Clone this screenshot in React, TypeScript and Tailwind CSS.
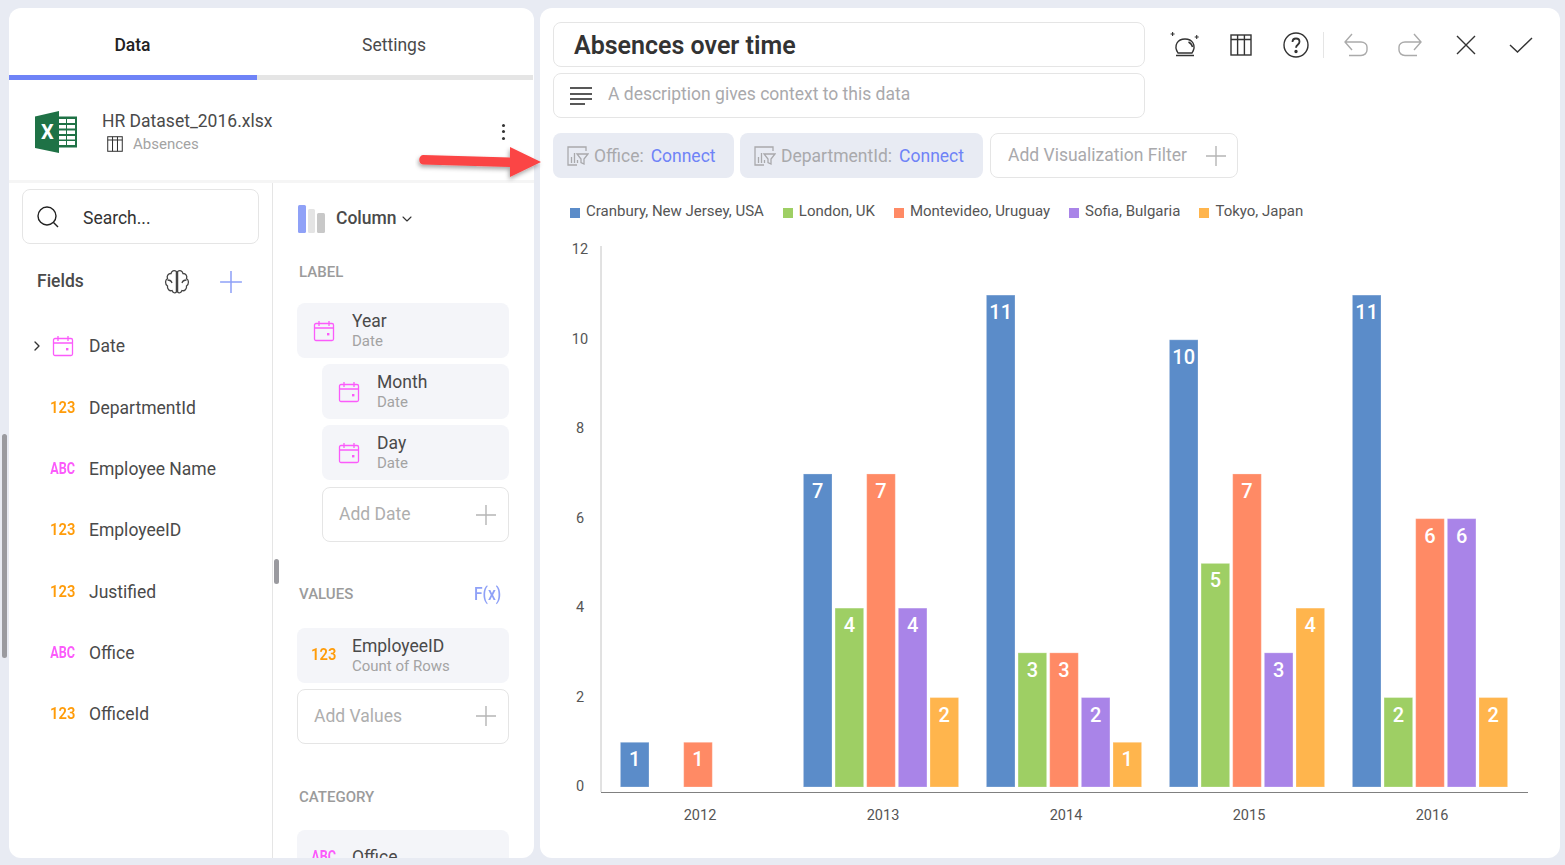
import { ChevronDown, ChevronRight } from "lucide-react";

const font = "font-['Roboto',sans-serif]";

function CalendarIcon() {
  return (
    <svg width="22" height="22" viewBox="0 0 22 22" fill="none" stroke="#fb5bfb" strokeWidth="1.3">
      <rect x="1.5" y="3.5" width="19" height="17" rx="1.5" />
      <path d="M1.5 8h19M6 1v5M16 1v5" />
      <rect x="14" y="13" width="2.4" height="2.4" fill="#fb5bfb" stroke="none" />
    </svg>
  );
}

function TableIcon({ size = 18, color = "#333" }: { size?: number; color?: string }) {
  return (
    <svg width={size} height={size} viewBox="0 0 22 22" fill="none" stroke={color} strokeWidth="1.4">
      <rect x="1" y="1" width="20" height="20" />
      <path d="M1 5.5h20M7.6 1v20M14.4 1v20" />
    </svg>
  );
}

function PlusIcon({ size = 22, color = "#b5b5b5" }: { size?: number; color?: string }) {
  return (
    <svg width={size} height={size} viewBox="0 0 22 22" fill="none" stroke={color} strokeWidth="1.4">
      <path d="M11 1v20M1 11h20" />
    </svg>
  );
}

function NumberTag() {
  return <span className="origin-center scale-x-[0.92] text-[16px] font-semibold text-[#ff9c0a]">123</span>;
}

function TextTag() {
  return <span className="origin-center scale-x-[0.74] text-[17px] font-bold text-[#fb5bfb]">ABC</span>;
}

function FieldRow({ name, tag, arrow }: { name: string; tag: React.ReactNode; arrow?: boolean }) {
  return (
    <div className="relative flex h-[61.3px] items-center pl-[40px]">
      {arrow && <ChevronRight size={16} strokeWidth={2} className="absolute left-[20px] top-[22px] text-[#333]" />}
      <div className="flex w-[27px] shrink-0 justify-center">{tag}</div>
      <span className="ml-[13px] text-[17.5px] text-[#4a4a4a]">{name}</span>
    </div>
  );
}

function Pill({ title, sub, icon, indent, tall }: { title: string; sub: string; icon: React.ReactNode; indent?: boolean; tall?: boolean }) {
  return (
    <div className={`flex shrink-0 items-center rounded-lg bg-[#f4f5f9] ${tall ? "h-[74px]" : "h-[55px]"} ${indent ? "ml-[25px]" : ""}`}>
      <div className={`flex w-[54px] shrink-0 justify-center ${tall ? "pb-[20px]" : ""}`}>{icon}</div>
      <div className="ml-[1px] flex flex-col">
        <span className="text-[17.5px] leading-[20px] text-[#4a4a4a]">{title}</span>
        <span className="mt-[2px] text-[15px] leading-[17px] text-[#a3a3a3]">{sub}</span>
      </div>
    </div>
  );
}

function AddBox({ label, indent }: { label: string; indent?: boolean }) {
  return (
    <div className={`flex h-[55px] items-center justify-between rounded-lg border border-[#e5e5e5] pl-[16px] pr-[11px] ${indent ? "ml-[25px]" : ""}`}>
      <span className="text-[17.5px] text-[#aeaeae]">{label}</span>
      <PlusIcon />
    </div>
  );
}

function SectionLabel({ children }: { children: React.ReactNode }) {
  return <div className="pl-[2px] text-[15px] font-medium leading-[21px] text-[#9b9b9b]">{children}</div>;
}

function FilterIcon() {
  return (
    <svg width="22" height="20" viewBox="0 0 22 20" fill="none" stroke="#a9a9ac" strokeWidth="1.3">
      <path d="M10 19H1V1h18v4" />
      <path d="M4.5 17v-6M7.5 17V7M10.5 17v-3" />
      <path d="M10 8h11l-4 5v5l-3-1.5V13z" />
    </svg>
  );
}

function FilterChip({ name, width }: { name: string; width: string }) {
  return (
    <div className={`flex h-[45px] items-center rounded-lg bg-[#e8ebf3] pl-[14px] pt-[1px] ${width}`}>
      <FilterIcon />
      <span className="ml-[5px] text-[17.5px] text-[#a9a9ac]">{name}:</span>
      <span className="ml-[7px] text-[17.5px] text-[#6f83f7]">Connect</span>
    </div>
  );
}

const legend = [
  { name: "Cranbury, New Jersey, USA", color: "#5b8cc9" },
  { name: "London, UK", color: "#9ecf64" },
  { name: "Montevideo, Uruguay", color: "#ff8a65" },
  { name: "Sofia, Bulgaria", color: "#a984e8" },
  { name: "Tokyo, Japan", color: "#ffb54d" },
];

const years = [
  { year: "2012", x: 80.4, values: [1, 0, 1, 0, 0] },
  { year: "2013", x: 263.4, values: [7, 4, 7, 4, 2] },
  { year: "2014", x: 446.4, values: [11, 3, 3, 2, 1] },
  { year: "2015", x: 629.4, values: [10, 5, 7, 3, 4] },
  { year: "2016", x: 812.4, values: [11, 2, 6, 6, 2] },
];

const unit = 44.72;
const baseY = 551;

function Chart() {
  return (
    <svg width="1020" height="600" viewBox="0 0 1020 600" className="block">
      {/* svg origin sits at page x=540, y=235 */}
      {[0, 2, 4, 6, 8, 10, 12].map((v) => (
        <text key={v} x="40" y={baseY - v * unit + 4} textAnchor="middle" fontSize="14.5" fill="#555">
          {v}
        </text>
      ))}
      {years.map((g) => (
        <g key={g.year}>
          {g.values.map((v, i) => {
            if (v === 0) return null;
            const x = g.x + i * 31.65;
            const h = v * unit;
            return (
              <g key={i}>
                <rect x={x} y={baseY - h} width="28.6" height={h} fill={legend[i].color} stroke="#fff" strokeOpacity="0.25" />
                <text x={x + 14.3} y={baseY - h + 24} textAnchor="middle" fontSize="20" fontWeight="500" fill="#fff">
                  {v}
                </text>
              </g>
            );
          })}
          <text x={g.x + 79.6} y="584" textAnchor="middle" fontSize="14.5" fill="#555">
            {g.year}
          </text>
        </g>
      ))}
      <path d="M61 10V556" stroke="#c4c4c4" strokeWidth="1" />
      <path d="M61 556.5H988" stroke="#808080" strokeWidth="1" />
    </svg>
  );
}

export default function App() {
  return (
    <div className={`relative flex h-[865px] w-[1565px] gap-[6px] overflow-hidden bg-[#e8ebf3] pb-[7px] pl-[9px] pr-[5px] pt-[8px] ${font}`}>
      {/* left panel */}
      <div className="flex w-[525px] shrink-0 flex-col overflow-hidden rounded-xl bg-white">
        <div className="flex h-[67px] shrink-0 items-center pt-[8px]">
          <div className="w-[247px] text-center text-[17.5px] font-medium text-[#222]">Data</div>
          <div className="w-[276px] text-center text-[17.5px] text-[#4a4a4a]">Settings</div>
        </div>
        <div className="flex h-[5px] shrink-0 pr-[1px]">
          <div className="w-[248px] bg-[#6f83f7]" />
          <div className="flex-1 bg-[#e5e5e5]" />
        </div>
        <div className="flex h-[103px] shrink-0 items-center border-b-[3px] border-[#f5f5f5] pl-[26px] pr-[29px] pt-[3px]">
          <svg width="42" height="42" viewBox="0 0 42 42" className="shrink-0">
            <rect x="20" y="5.5" width="22" height="31" fill="#1f7246" />
            <path d="M22 8h9v4h-9zM32 8h8v4h-8zM24 14h7v3.5h-7zM32 14h8v3.5h-8zM24 19.5h7V23h-7zM32 19.5h8V23h-8zM24 25h7v3.5h-7zM32 25h8v3.5h-8zM24 30h7v4h-7zM32 30h8v4h-8z" fill="#fff" />
            <path d="M0 5.5L24 0v42L0 37z" fill="#1f7246" />
            <text x="6" y="28" fontSize="20" fontWeight="700" fill="#fff">X</text>
          </svg>
          <div className="ml-[25px] flex flex-1 flex-col">
            <span className="text-[17.5px] leading-[20px] text-[#4a4a4a]">HR Dataset_2016.xlsx</span>
            <div className="mt-[4px] flex items-center pl-[5px]">
              <TableIcon size={16} />
              <span className="ml-[10px] text-[15px] leading-[18px] text-[#a3a3a3]">Absences</span>
            </div>
          </div>
          <div className="flex flex-col gap-[3.5px]">
            <div className="h-[3px] w-[3px] rounded-full bg-[#333]" />
            <div className="h-[3px] w-[3px] rounded-full bg-[#333]" />
            <div className="h-[3px] w-[3px] rounded-full bg-[#333]" />
          </div>
        </div>
        <div className="flex min-h-0 flex-1">
          {/* field list */}
          <div className="w-[264px] shrink-0 border-r border-[#e5e5e5]">
            <div className="ml-[13px] mt-[6px] flex h-[55px] w-[237px] items-center rounded-lg border border-[#e5e5e5] pl-[14px]">
              <svg width="22" height="22" viewBox="0 0 22 22" fill="none" stroke="#222" strokeWidth="1.4">
                <circle cx="10" cy="10" r="9" />
                <path d="M16.5 16.5L21 21" />
              </svg>
              <span className="ml-[24px] pt-[3px] text-[17.5px] text-[#333]">Search...</span>
            </div>
            <div className="flex h-[75px] items-center pl-[28px]">
              <span className="text-[17.5px] font-medium text-[#4a4a4a]">Fields</span>
              <svg width="26" height="26" viewBox="0 0 26 26" fill="none" stroke="#444" strokeWidth="1.3" className="ml-[80px]">
                <path d="M12.4 2.5C10 .8 7.6 2 7 4.5 4 4.5 2.5 7 3.5 9.5 1 11 .8 15 3.5 17c-.5 3 2 5.5 4.5 4.5 1 2.5 3 3 4.4 1.5zM13.6 2.5C16 .8 18.4 2 19 4.5c3 0 4.5 2.5 3.5 5 2.5 1.5 2.7 5.5 0 7.5.5 3-2 5.5-4.5 4.5-1 2.5-3 3-4.4 1.5z" />
                <path d="M3.5 11c2.500 0 4 1 4.500 3M22.500 11c-2.500 0-4 1-4.500 3" />
              </svg>
              <div className="ml-[29px]"><PlusIcon size={24} color="#8fa1f7" /></div>
            </div>
            <div className="mt-[-3.2px]">
              <FieldRow name="Date" tag={<CalendarIcon />} arrow />
              <FieldRow name="DepartmentId" tag={<NumberTag />} />
              <FieldRow name="Employee Name" tag={<TextTag />} />
              <FieldRow name="EmployeeID" tag={<NumberTag />} />
              <FieldRow name="Justified" tag={<NumberTag />} />
              <FieldRow name="Office" tag={<TextTag />} />
              <FieldRow name="OfficeId" tag={<NumberTag />} />
            </div>
          </div>
          {/* visualization config */}
          <div className="relative flex min-w-0 flex-1 flex-col overflow-hidden pl-[24px] pr-[25px]">
            <div className="flex h-[70px] shrink-0 items-center pl-[1px] pt-[1px]">
              <svg width="27" height="28" viewBox="0 0 27 28">
                <rect x="0" y="0" width="8" height="28" rx="1.5" fill="#8fa1f7" />
                <rect x="10" y="4" width="7" height="24" rx="1.5" fill="#e4e4e4" />
                <rect x="19" y="8" width="8" height="20" rx="1.5" fill="#c8c8c8" />
              </svg>
              <span className="ml-[11px] text-[17.5px] font-medium text-[#4a4a4a]">Column</span>
              <ChevronDown size={16} strokeWidth={1.6} className="ml-[2px] text-[#333]" />
            </div>
            <div className="mt-[9px]"><SectionLabel>LABEL</SectionLabel></div>
            <div className="mt-[20px] flex flex-col gap-[6px]">
              <Pill title="Year" sub="Date" icon={<CalendarIcon />} />
              <Pill title="Month" sub="Date" icon={<CalendarIcon />} indent />
              <Pill title="Day" sub="Date" icon={<CalendarIcon />} indent />
              <div className="mt-[1px]"><AddBox label="Add Date" indent /></div>
            </div>
            <div className="mt-[38px] flex items-center justify-between pr-[8px]">
              <SectionLabel>VALUES</SectionLabel>
              <span className="origin-right scale-x-[0.82] text-[19px] font-medium text-[#8fa1f7]">F(x)</span>
            </div>
            <div className="mt-[19px] flex flex-col gap-[6px]">
              <Pill title="EmployeeID" sub="Count of Rows" icon={<NumberTag />} />
              <AddBox label="Add Values" />
            </div>
            <div className="mt-[43px]"><SectionLabel>CATEGORY</SectionLabel></div>
            <div className="mt-[22px]">
              <Pill title="Office" sub="Category" icon={<TextTag />} tall />
            </div>
          </div>
        </div>
      </div>

      {/* right panel */}
      <div className="flex min-w-0 flex-1 flex-col overflow-hidden rounded-xl bg-white">
        <div className="flex pl-[13px] pt-[14px]">
          <div className="flex w-[592px] shrink-0 flex-col gap-[6px]">
            <div className="flex h-[45px] items-center rounded-lg border border-[#e5e5e5] pl-[20px] pt-[2px] text-[25px] font-semibold text-[#333]">Absences over time</div>
            <div className="flex h-[45px] items-center rounded-lg border border-[#e5e5e5] pl-[15px]">
              <svg width="24" height="20" viewBox="0 0 24 20" stroke="#222" strokeWidth="1.4">
                <path d="M1 2h22M1 8h22M1 13h22M1 18h15" />
              </svg>
              <span className="ml-[15px] pb-[2px] text-[17.5px] text-[#a9a9ac]">A description gives context to this data</span>
            </div>
          </div>
          <div className="flex h-[45px] items-center pl-[25px]">
            <svg width="32" height="30" viewBox="0 0 32 30" fill="none" stroke="#333" strokeWidth="1.4">
              <path d="M8 23C3 15 8 9 15 9s12 6 7 14z" />
              <path d="M6 25.500h18M18.500 12c2 1 3.500 2.500 4 5" />
              <path d="M2.600 2v4M.6 4h4M26.700 5v4M24.700 7h4" strokeWidth="1.100" />
            </svg>
            <div className="ml-[28px]"><TableIcon size={22} /></div>
            <svg width="26" height="26" viewBox="0 0 26 26" fill="none" stroke="#333" strokeWidth="1.4" className="ml-[31px]">
              <circle cx="13" cy="13" r="12" />
              <path d="M9.500 10c0-2 1.500-3.500 3.500-3.500s3.500 1.400 3.500 3.300c0 3-3.500 3-3.500 6" strokeWidth="1.800" />
              <circle cx="13" cy="19.500" r="1" fill="#333" />
            </svg>
            <div className="ml-[14px] h-[26px] w-px bg-[#e5e5e5]" />
            <svg width="24" height="24" viewBox="0 0 24 24" fill="none" stroke="#aaa" strokeWidth="1.4" className="ml-[20px]">
              <path d="M8 1L1 9l7 8M1 9h16c3.500 0 6 2.500 6 5v3c0 3-2.500 5.500-6 5.500H5" />
            </svg>
            <svg width="24" height="24" viewBox="0 0 24 24" fill="none" stroke="#aaa" strokeWidth="1.4" className="ml-[30px]">
              <path d="M16 1l7 8-7 8M23 9H7c-3.500 0-6 2.500-6 5v3c0 3 2.500 5.500 6 5.500h12" />
            </svg>
            <svg width="20" height="20" viewBox="0 0 20 20" fill="none" stroke="#333" strokeWidth="1.4" className="ml-[34px]">
              <path d="M1 1l18 18M19 1L1 19" />
            </svg>
            <svg width="24" height="18" viewBox="0 0 24 18" fill="none" stroke="#333" strokeWidth="1.4" className="ml-[33px]">
              <path d="M1 9l7.500 7L23 2" />
            </svg>
          </div>
        </div>
        <div className="mt-[15px] flex gap-[6px] pl-[13px]">
          <FilterChip name="Office" width="w-[181px]" />
          <FilterChip name="DepartmentId" width="w-[243px]" />
          <div className="ml-[1px] flex h-[45px] w-[248px] items-center justify-between rounded-lg border border-[#e5e5e5] pl-[17px] pr-[10px]">
            <span className="text-[17.5px] text-[#a9a9ac]">Add Visualization Filter</span>
            <PlusIcon />
          </div>
        </div>
        <div className="mt-[24px] flex h-[18px] items-center pl-[30px]">
          {legend.map((l) => (
            <div key={l.name} className="mr-[19px] flex items-center">
              <div className="mt-[3px] h-[10px] w-[10px]" style={{ backgroundColor: l.color }} />
              <span className="ml-[6px] text-[15px] text-[#555]">{l.name}</span>
            </div>
          ))}
        </div>
        <div className="mt-[16px]"><Chart /></div>
      </div>

      {/* scrollbar thumbs */}
      <div className="absolute left-[2px] top-[434px] h-[224px] w-[5px] rounded-full bg-[#9a9a9f]" />
      <div className="absolute left-[274px] top-[559px] h-[25px] w-[5px] rounded-full bg-[#9a9a9f]" />

      {/* annotation arrow over the panels */}
      <svg width="135" height="45" viewBox="0 0 135 45" className="absolute left-[415px] top-[143px]">
        <defs>
          <filter id="arrowShadow" x="-10%" y="-20%" width="120%" height="160%">
            <feDropShadow dx="-1" dy="2.500" stdDeviation="2" floodColor="#000" floodOpacity="0.35" />
          </filter>
        </defs>
        <path d="M8 12L95 14.500V4L126 19L95 34V24L8 21.500C3 21 3 12.500 8 12Z" fill="#fb4444" filter="url(#arrowShadow)" />
      </svg>
    </div>
  );
}
